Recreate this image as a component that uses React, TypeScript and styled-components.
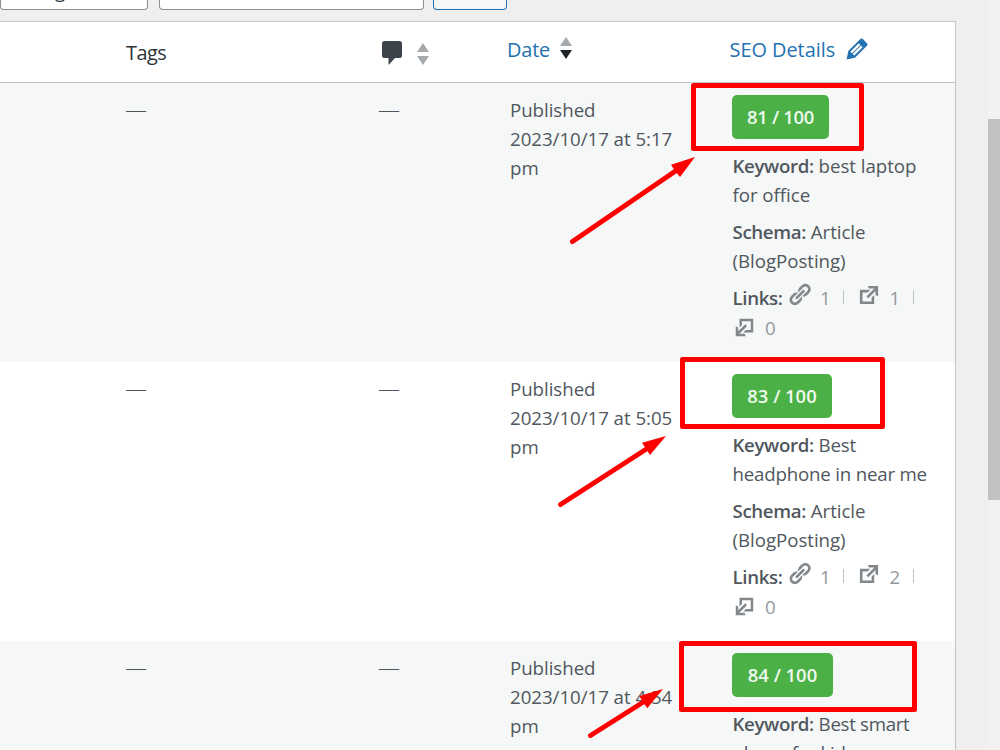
import React from "react";
import styled, { createGlobalStyle } from "styled-components";

const GlobalStyle = createGlobalStyle`
  * { box-sizing: border-box; }
  body {
    margin: 0;
    background: #f0f0f1;
    color: #50575e;
    font-family: "Open Sans", "Noto Sans", sans-serif;
    font-size: 18.7px;
    line-height: 29px;
    letter-spacing: -0.04px;
    overflow: hidden;
  }
`;

const Page = styled.div`
  position: relative;
  display: flex;
  justify-content: space-between;
  width: 1000px;
  height: 750px;
  overflow: hidden;
  background: #efefef;
`;

const Main = styled.main`
  display: flex;
  flex-direction: column;
  width: 956px;
`;

const Toolbar = styled.div`
  display: flex;
  align-items: flex-start;
  height: 21px;
  flex: none;
`;

const Control = styled.div<{ $width: number; $gap: number; $primary?: boolean }>`
  display: flex;
  align-items: flex-end;
  flex: none;
  width: ${(p) => p.$width}px;
  height: 10px;
  margin-right: ${(p) => p.$gap}px;
  border: 1px solid ${(p) => (p.$primary ? "#2271b1" : "#8c8f94")};
  border-top: 0;
  border-radius: 0 0 4px 4px;
  background: ${(p) => (p.$primary ? "#f6f7f7" : "#fff")};
  color: #2c3338;
`;

const ControlLabel = styled.span`
  margin: 0 0 4px -11px;
  white-space: nowrap;
`;

const Table = styled.section`
  flex: none;
  width: 956px;
  border: 1px solid #c3c4c7;
  border-width: 1px 1px 0 0;
  background: #fff;
`;

const columns = `
  display: grid;
  grid-template-columns: 126px 253px 131px 222px 1fr;
`;

const HeaderRow = styled.div`
  ${columns}
  height: 61px;
  border-bottom: 1px solid #c3c4c7;
  font-size: 19.9px;
`;

const HeaderCell = styled.div<{
  $top: number;
  $col: number;
  $link?: boolean;
  $shift?: number;
  $tracking?: number;
}>`
  grid-column: ${(p) => p.$col};
  display: flex;
  align-items: center;
  height: 30px;
  margin-top: ${(p) => p.$top}px;
  margin-left: ${(p) => p.$shift ?? 0}px;
  letter-spacing: ${(p) => p.$tracking ?? 0}px;
  white-space: nowrap;
  color: ${(p) => (p.$link ? "#2271b1" : "#2c3338")};
`;

const CommentIcon = styled.svg`
  flex: none;
  width: 20px;
  height: 24px;
`;

const PencilIcon = styled.svg`
  flex: none;
  width: 30px;
  height: 30px;
  margin-left: 6.5px;
  fill: #2271b1;
`;

const SortIcon = styled.svg<{ $left: number; $down?: number }>`
  flex: none;
  width: 12px;
  height: 22px;
  margin-left: ${(p) => p.$left}px;
  margin-top: ${(p) => p.$down ?? 0}px;
`;

const Row = styled.div<{ $alt?: boolean }>`
  ${columns}
  height: 279px;
  background: ${(p) => (p.$alt ? "#f6f7f7" : "#fff")};
  white-space: nowrap;
`;

const DashCell = styled.div<{ $col: number }>`
  grid-column: ${(p) => p.$col};
  margin-left: -1px;
  padding-top: 12px;
  font-size: 22px;
  font-weight: 300;
`;

const DateCell = styled.div`
  grid-column: 4;
  padding-top: 12px;
`;

const SeoCell = styled.div`
  grid-column: 5;
  padding-top: 12px;
`;

const Badge = styled.div<{ $width: number; $tracking: number }>`
  display: flex;
  justify-content: center;
  width: ${(p) => p.$width}px;
  height: 44px;
  margin-bottom: 12px;
  padding-top: 7px;
  border-radius: 5px;
  background: #4bb147;
  color: #f0f9ef;
  font-size: 18.4px;
  font-weight: 600;
  letter-spacing: ${(p) => p.$tracking}px;
`;

const Detail = styled.div`
  margin: 0 0 8px 0.5px;
`;

const Label = styled.strong`
  font-weight: 600;
  letter-spacing: -0.36px;
`;

const Keyword = styled.span<{ $tracking: number }>`
  letter-spacing: ${(p) => p.$tracking}px;
`;

const Links = styled.div`
  margin: -1px 0 0 0.5px;
`;

const LinksLine = styled.div`
  display: flex;
  align-items: center;
  height: 30px;
`;

const Count = styled.span<{ $left: number }>`
  margin-left: ${(p) => p.$left}px;
  width: 11px;
  color: #94989d;
`;

const Divider = styled.span<{ $left: number }>`
  width: 1px;
  height: 14px;
  margin-left: ${(p) => p.$left}px;
  background: #bfc2c5;
`;

const Icon = styled.svg<{ $size: number; $left?: number; $up?: number }>`
  flex: none;
  width: ${(p) => p.$size}px;
  height: ${(p) => p.$size}px;
  margin-left: ${(p) => p.$left ?? 0}px;
  margin-bottom: ${(p) => p.$up ?? 0}px;
  fill: #82878c;
`;

const Scrollbar = styled.div`
  width: 12px;
  height: 750px;
  padding-top: 119px;
  background: #f1f1f1;
`;

const Thumb = styled.div`
  height: 381px;
  background: #c1c1c1;
`;

const Annotations = styled.svg`
  position: absolute;
  inset: 0;
  width: 1000px;
  height: 750px;
  pointer-events: none;
`;

const LINK =
  "M17.74 2.76c1.68 1.69 1.68 4.41 0 6.1l-1.53 1.52c-1.12 1.12-2.7 1.47-4.14 1.09l2.62-2.61.76-.77.76-.76c.84-.84.84-2.2 0-3.04-.84-.85-2.2-.85-3.04 0l-.77.76-3.38 3.38c-.37-1.44-.02-3.02 1.1-4.14l1.52-1.53c1.69-1.68 4.42-1.68 6.1 0zM8.59 13.43l5.34-5.34c.42-.42.42-1.1 0-1.52-.44-.43-1.13-.39-1.53 0l-5.33 5.34c-.42.42-.42 1.1 0 1.52.44.43 1.13.39 1.52 0zm-.76 2.29l4.14-4.15c.38 1.44.03 3.02-1.09 4.14l-1.52 1.53c-1.69 1.68-4.41 1.68-6.1 0-1.68-1.68-1.68-4.42 0-6.1l1.53-1.52c1.12-1.12 2.7-1.47 4.14-1.1l-4.14 4.15c-.85.84-.85 2.2 0 3.05.84.84 2.2.84 3.04 0z";
const EXTERNAL =
  "M9 3h8v8l-2-1V6.92l-5.6 5.59-1.41-1.41L14.08 5H10zm3 12v-3l2-2v7H3V6h8L9 8H5v7h7z";
const EDIT =
  "M13.89 3.39l2.71 2.72c.46.46.42 1.24.03 1.64l-8.01 8.02-5.56 1.16 1.16-5.58s7.6-7.63 7.99-8.03c.39-.39 1.22-.39 1.68.07zm-2.73 2.79l-5.59 5.61 1.11 1.11 5.54-5.65zm-2.97 8.23l5.58-5.6-1.07-1.08-5.59 5.6z";

const Sort = ({ desc, left, down }: { desc?: boolean; left: number; down?: number }) => (
  <SortIcon viewBox="0 0 12 22" $left={left} $down={down}>
    <path d="M6 0L12 9H0Z" fill="#a7aaad" />
    <path d="M6 22L12 13H0Z" fill={desc ? "#1d2327" : "#a7aaad"} />
  </SortIcon>
);

type Post = {
  time: string;
  score: number;
  badge: number;
  badgeTracking: number;
  keyword: [string, string];
  tracking: number;
  external: number;
};

const posts: Post[] = [
  { time: "5:17", score: 81, badge: 97, badgeTracking: -0.3, keyword: ["best laptop", "for office"], tracking: -0.04, external: 1 },
  { time: "5:05", score: 83, badge: 100, badgeTracking: 0, keyword: ["Best", "headphone in near me"], tracking: -0.2, external: 2 },
  { time: "4:54", score: 84, badge: 101, badgeTracking: 0, keyword: ["Best smart", "phone for kids"], tracking: -0.3, external: 1 },
];

const PostRow = ({ post, alt }: { post: Post; alt: boolean }) => (
  <Row $alt={alt}>
    <DashCell $col={2}>—</DashCell>
    <DashCell $col={3}>—</DashCell>
    <DateCell>
      Published
      <br />
      2023/10/17 at {post.time}
      <br />
      pm
    </DateCell>
    <SeoCell>
      <Badge $width={post.badge} $tracking={post.badgeTracking}>
        {post.score} / 100
      </Badge>
      <Detail>
        <Label>Keyword:</Label>{" "}
        <Keyword $tracking={post.tracking}>
          {post.keyword[0]}
          <br />
          {post.keyword[1]}
        </Keyword>
      </Detail>
      <Detail>
        <Label>Schema:</Label> Article
        <br />
        (BlogPosting)
      </Detail>
      <Links>
        <LinksLine>
          <Label>Links:</Label>
          <Icon viewBox="0 0 20 20" $size={25} $left={4} $up={5}>
            <path d={LINK} />
          </Icon>
          <Count $left={8.5}>1</Count>
          <Divider $left={12} />
          <Icon viewBox="0 0 20 20" $size={26} $left={12} $up={5}>
            <path d={EXTERNAL} />
          </Icon>
          <Count $left={7.5}>{post.external}</Count>
          <Divider $left={12.5} />
        </LinksLine>
        <LinksLine>
          <Icon viewBox="0 0 20 20" $size={25} $left={-1}>
            <path d={EXTERNAL} transform="rotate(180 10 10)" />
          </Icon>
          <Count $left={8.5}>0</Count>
        </LinksLine>
      </Links>
    </SeoCell>
  </Row>
);

export default function App() {
  return (
    <Page>
      <GlobalStyle />
      <Main>
        <Toolbar>
          <Control $width={148} $gap={11}>
            <ControlLabel>All Categories</ControlLabel>
          </Control>
          <Control $width={265} $gap={9} />
          <Control $width={74} $gap={0} $primary />
        </Toolbar>
        <Table>
          <HeaderRow>
            <HeaderCell $col={2} $top={15} $tracking={-0.5}>
              Tags
            </HeaderCell>
            <HeaderCell $col={3} $top={16} $shift={3}>
              <CommentIcon viewBox="0 0 20 24">
                <path
                  d="M2.5 0h15A2.5 2.5 0 0 1 20 2.5v12a2.5 2.5 0 0 1-2.5 2.5H13l-6.5 7v-7h-4A2.5 2.5 0 0 1 0 14.5v-12A2.5 2.5 0 0 1 2.5 0z"
                  fill="#3c434a"
                />
              </CommentIcon>
              <Sort left={15} down={1} />
            </HeaderCell>
            <HeaderCell $col={4} $top={12} $shift={-3} $tracking={-0.15} $link>
              Date
              <Sort left={9.5} down={-3} desc />
            </HeaderCell>
            <HeaderCell $col={5} $top={12} $shift={-2.5} $tracking={-0.02} $link>
              SEO Details
              <PencilIcon viewBox="0 0 20 20">
                <path d={EDIT} />
              </PencilIcon>
            </HeaderCell>
          </HeaderRow>
          {posts.map((post, i) => (
            <PostRow key={post.time} post={post} alt={i % 2 === 0} />
          ))}
        </Table>
      </Main>
      <Scrollbar>
        <Thumb />
      </Scrollbar>
      <Annotations viewBox="0 0 1000 750">
        <g fill="none" stroke="#fe0000" strokeWidth="5" strokeLinejoin="round" strokeLinecap="round">
          <rect x="693.5" y="85.5" width="168" height="63" />
          <rect x="682.5" y="359.5" width="200" height="67" />
          <rect x="681.5" y="643.5" width="233" height="66" />
          <path d="M572.5 241.5L677 170M560.5 504.5L648 448M590.5 735.5L645 701" />
        </g>
        <g fill="#fe0000">
          <path d="M695 157L671 164.7L675 171L680 177Z" />
          <path d="M666 436L642 442.7L646 449L650 455Z" />
          <path d="M663 689L639.3 696L643 702L647.3 708.3Z" />
        </g>
      </Annotations>
    </Page>
  );
}
